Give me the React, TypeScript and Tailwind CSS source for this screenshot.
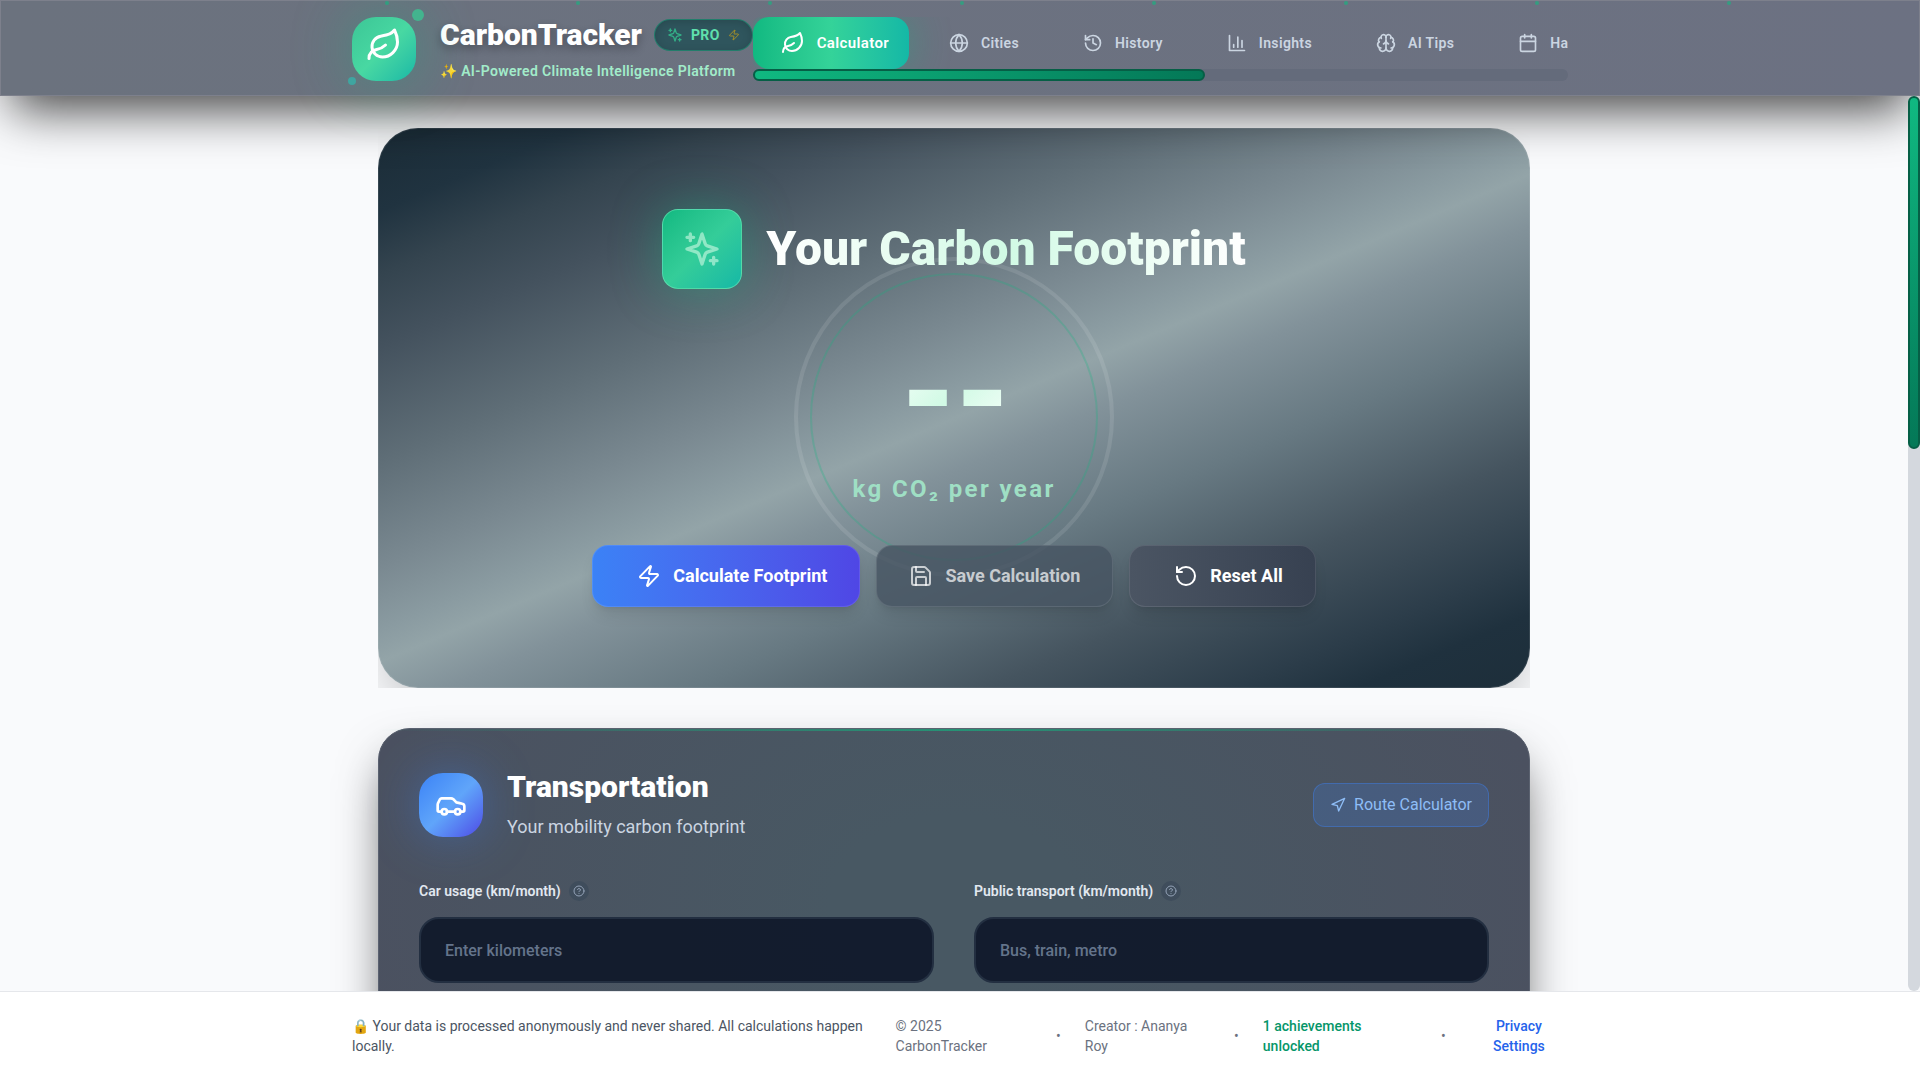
import { useId, useState } from "react";
import type { ReactNode } from "react";
import {
  Brain,
  Calendar,
  Car,
  CircleHelp,
  Globe,
  History,
  Leaf,
  Navigation,
  RotateCcw,
  Save,
  Zap,
} from "lucide-react";
import clsx from "clsx";

interface IconProps {
  size?: number;
  className?: string;
}

function Sparkles({ size = 24, className }: IconProps) {
  return (
    <svg
      width={size}
      height={size}
      viewBox="0 0 24 24"
      fill="none"
      stroke="currentColor"
      strokeWidth={2}
      strokeLinecap="round"
      strokeLinejoin="round"
      className={className}
      aria-hidden="true"
    >
      <path d="m12 3-1.912 5.813a2 2 0 0 1-1.275 1.275L3 12l5.813 1.912a2 2 0 0 1 1.275 1.275L12 21l1.912-5.813a2 2 0 0 1 1.275-1.275L21 12l-5.813-1.912a2 2 0 0 1-1.275-1.275L12 3Z" />
      <path d="M5 3v4M19 17v4M3 5h4M17 19h4" />
    </svg>
  );
}

function BarChart({ size = 24, className }: IconProps) {
  return (
    <svg
      width={size}
      height={size}
      viewBox="0 0 24 24"
      fill="none"
      stroke="currentColor"
      strokeWidth={2}
      strokeLinecap="round"
      strokeLinejoin="round"
      className={className}
      aria-hidden="true"
    >
      <path d="M3 3v18h18" />
      <path d="M18 17V9M13 17V5M8 17v-3" />
    </svg>
  );
}

const tabs = [
  { id: "calculator", label: "Calculator", icon: Leaf },
  { id: "cities", label: "Cities", icon: Globe },
  { id: "history", label: "History", icon: History },
  { id: "insights", label: "Insights", icon: BarChart },
  { id: "tips", label: "AI Tips", icon: Brain },
  { id: "habits", label: "Habits", icon: Calendar },
];

const particles = [20, 30, 40, 50, 60, 70, 80, 90];

function Logo() {
  return (
    <div className="relative flex size-16 shrink-0 items-center justify-center rounded-3xl bg-linear-135 from-[#3cc696] via-[#48d8a2] to-[#14b8a6] pb-2 shadow-[0_0_60px_rgba(16,185,129,0.4)]">
      <Leaf size={36} strokeWidth={2} className="text-white" />
      <span className="absolute -top-2 -right-2 size-3 rounded-full bg-[#43b48e]" />
      <span className="absolute -bottom-1 -left-1 size-2 rounded-full bg-[#3fa5a0]" />
    </div>
  );
}

function Header() {
  const [activeTab, setActiveTab] = useState("calculator");

  return (
    <header className="relative z-10 border border-[#7d808c] bg-linear-to-r from-[#6b727e] to-[#6c7182] shadow-[0_25px_50px_-12px_rgba(0,0,0,0.75)]">
      {particles.map((left) => (
        <span
          key={left}
          className="absolute top-0 size-1 rounded-full bg-[#10b981]/60"
          style={{ left: `${left}%` }}
        />
      ))}

      <div className="mx-auto flex max-w-7xl items-center px-8 pt-4 pb-3.5">
        <div className="flex shrink-0 items-center gap-6">
          <Logo />
          <div>
            <div className="flex items-center gap-3">
              <h1 className="text-[30px] leading-9 font-black text-white [text-shadow:0_4px_8px_rgba(0,0,0,0.3)]">
                CarbonTracker
              </h1>
              <span className="flex h-8 items-center gap-2 rounded-full border border-[#10b981]/40 bg-[#2f555d] px-3 text-sm font-bold tracking-wide text-[#5fe0ad] shadow-[inset_0_2px_8px_rgba(0,0,0,0.15)]">
                <Sparkles size={16} className="text-[#34d399]/70" />
                PRO
                <Zap size={12} className="text-[#eab308]/60" />
              </span>
            </div>
            <p className="mt-2 text-sm font-semibold tracking-wide text-[#a2ecca]">
              ✨ AI-Powered Climate Intelligence Platform
            </p>
          </div>
        </div>

        <nav className="min-w-0 flex-1" aria-label="Main">
          <div className="flex gap-3 overflow-hidden rounded-l-lg">
            {tabs.map(({ id, label, icon: Icon }) => (
              <button
                key={id}
                type="button"
                onClick={() => setActiveTab(id)}
                aria-current={activeTab === id ? "page" : undefined}
                className={clsx(
                  "flex h-13 shrink-0 items-center gap-3 pl-7 font-semibold tracking-wide",
                  activeTab === id
                    ? "rounded-2xl bg-linear-to-r from-[#10b981] via-[#34d399] to-[#14b8a6] pr-5 text-[15px] text-white shadow-[0_0_40px_rgba(16,185,129,0.4)]"
                    : "pr-6 text-sm text-[#cbd5e1]"
                )}
              >
                <Icon size={activeTab === id ? 24 : 20} />
                {label}
              </button>
            ))}
          </div>
          <div className="h-3 rounded-md bg-[#646b7b]">
            <div className="h-3 w-[452px] rounded-md border-2 border-[#065f46] bg-linear-to-r from-[#10b981] to-[#047857]" />
          </div>
        </nav>
      </div>
    </header>
  );
}

function Hero() {
  return (
    <div className="overflow-hidden">
      <section className="rounded-[40px] border border-white/10 bg-[linear-gradient(157deg,#1a2b36_0%,#203340_8%,#34444f_14%,#44525e_21%,#5f6e77_32%,#7a8991_42%,#8a9ba1_48%,#93a4a8_51%,#82929a_56%,#677982_66%,#45545f_78%,#2c3d4a_88%,#1f313e_93%,#1d2e3a_100%)] bg-origin-border p-20 shadow-[0_25px_50px_-12px_rgba(0,0,0,0.25)]">
        <div className="flex items-center justify-center gap-6">
          <div className="flex size-20 items-center justify-center rounded-2xl border border-[#6ee7b7]/60 bg-linear-135 from-[#10b981] via-[#34cd99] to-[#14b8a6] shadow-[0_0_50px_rgba(16,185,129,0.4)]">
            <Sparkles size={40} className="text-[#d1fae5]/60" />
          </div>
          <h2 className="relative z-10 bg-linear-to-r from-white via-[#d1fae5] to-white bg-clip-text text-5xl leading-[60px] font-black text-transparent">
            Your Carbon Footprint
          </h2>
        </div>

        <div className="relative flex flex-col items-center py-10">
          <div className="absolute top-1/2 left-1/2 size-80 -translate-x-1/2 -translate-y-1/2 rounded-full border-4 border-white/10 p-3">
            <div className="size-full rounded-full border-2 border-[#10b981]/25" />
          </div>
          <div className="relative bg-linear-135 from-white via-[#d1fae5] to-white bg-clip-text text-9xl leading-none font-black tracking-tight text-transparent">
            --
          </div>
          <p className="relative mt-4 text-2xl leading-8 font-bold tracking-widest text-[#9fdfc4]">
            kg CO₂ per year
          </p>
        </div>

        <div className="relative flex justify-center gap-4 text-lg font-bold text-white">
          <button
            type="button"
            className="flex items-center gap-3 rounded-2xl border border-white/10 bg-linear-to-r from-[#3b82f6] to-[#4f46e5] bg-origin-border py-4 pr-8 pl-11 shadow-lg"
          >
            <Zap size={24} />
            Calculate Footprint
          </button>
          <button
            type="button"
            className="flex items-center gap-3 rounded-2xl border border-white/10 bg-[#465461]/80 px-8 py-4 text-white/70 shadow-lg"
          >
            <Save size={24} />
            Save Calculation
          </button>
          <button
            type="button"
            className="flex items-center gap-3 rounded-2xl border border-white/10 bg-linear-to-r from-[#4b5563] to-[#374151] bg-origin-border py-4 pr-8 pl-11 shadow-lg"
          >
            <RotateCcw size={24} />
            Reset All
          </button>
        </div>
      </section>
    </div>
  );
}

function Field({ label, placeholder }: { label: ReactNode; placeholder: string }) {
  const id = useId();

  return (
    <div>
      <div className="mb-4 flex items-center gap-2">
        <label htmlFor={id} className="text-sm font-semibold text-[#e2e8f0]">
          {label}
        </label>
        <button
          type="button"
          aria-label="Help"
          className="flex size-5 items-center justify-center rounded-full bg-[#3f4d5c] text-[#94a3b8]"
        >
          <CircleHelp size={12} />
        </button>
      </div>
      <input
        id={id}
        type="text"
        placeholder={placeholder}
        className="h-[66px] w-full rounded-[20px] border-2 border-[#232f41] bg-[#0d1628]/90 px-6 text-base font-medium text-white placeholder:text-[#64748b]"
      />
    </div>
  );
}

function Transportation() {
  return (
    <section className="relative mt-10 rounded-4xl border border-[#5b6270] bg-[#4b5160] bg-[radial-gradient(ellipse_at_50%_30%,#485863_15%,#4b5160_75%)] px-10 pt-10 pb-80 shadow-[0_25px_50px_-12px_rgba(0,0,0,0.75)]">
      <div className="absolute inset-x-0 top-0 h-0.5 bg-linear-to-r from-transparent via-[#10b981]/60 to-transparent" />
      <div className="mb-10 flex items-center justify-between">
        <div className="flex items-center gap-6">
          <div className="flex size-16 items-center justify-center rounded-3xl bg-linear-135 from-[#3b82f6] via-[#60a5fa] to-[#4f46e5] shadow-[0_0_50px_rgba(59,130,246,0.4)]">
            <Car size={32} className="text-white" />
          </div>
          <div>
            <h2 className="text-3xl leading-9 font-black text-white">Transportation</h2>
            <p className="mt-2 text-lg leading-7 text-[#cbd5e1]">
              Your mobility carbon footprint
            </p>
          </div>
        </div>
        <button
          type="button"
          className="flex h-11 items-center gap-2 rounded-xl border border-[#3b82f6]/40 bg-[#3b82f6]/20 px-4 text-base text-[#8ebdf6]"
        >
          <Navigation size={16} />
          Route Calculator
        </button>
      </div>
      <div className="grid grid-cols-2 gap-10">
        <Field label="Car usage (km/month)" placeholder="Enter kilometers" />
        <Field label="Public transport (km/month)" placeholder="Bus, train, metro" />
      </div>
    </section>
  );
}

function Footer() {
  return (
    <footer className="relative z-20 border-t border-[#e5e7eb] bg-white py-6">
      <div className="mx-auto flex max-w-7xl items-center justify-between px-8 text-sm text-[#6b7280]">
        <p className="text-[#4b5563]">
          🔒 Your data is processed anonymously and never shared. All calculations happen locally.
        </p>
        <div className="flex items-center gap-6">
          <span>© 2025 CarbonTracker</span>
          <span>•</span>
          <span>Creator : Ananya Roy</span>
          <span>•</span>
          <span className="font-medium text-[#059669]">1 achievements unlocked</span>
          <span>•</span>
          <button type="button" className="font-medium text-[#2563eb]">
            Privacy Settings
          </button>
        </div>
      </div>
    </footer>
  );
}

export default function App() {
  return (
    <div className="flex h-screen flex-col overflow-hidden bg-[#f9fafc] font-[Roboto,sans-serif]">
      <Header />
      <div className="flex min-h-0 flex-1">
        <main className="min-w-0 flex-1 overflow-y-auto [scrollbar-width:none]">
          <div className="mx-auto max-w-6xl py-8">
            <Hero />
            <Transportation />
          </div>
        </main>
        <div className="relative z-20 w-3 rounded-md bg-[#d4d8de]">
          <div className="h-[353px] rounded-md border-2 border-[#065f46] bg-linear-to-b from-[#10b981] to-[#047857]" />
        </div>
      </div>
      <Footer />
    </div>
  );
}
